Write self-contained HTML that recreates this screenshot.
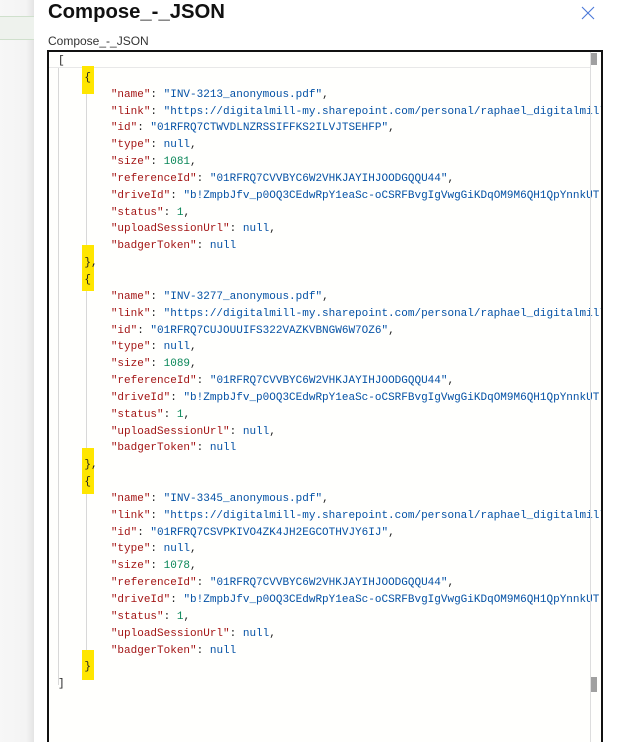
<!DOCTYPE html>
<html style="overflow:hidden;height:742px"><head><style>
body{margin:0;width:618px;height:742px;overflow:hidden;background:#fff;font-family:"Liberation Sans",sans-serif;position:relative}
.left{position:absolute;left:0;top:0;width:34px;height:742px;background:linear-gradient(to right,#f7f7f7 0,#f4f4f4 26px,#e4e4e4 34px)}
.lt{position:absolute;left:0;top:16px;width:34px;height:22px;background:#eef2ed;border-top:1px solid #cfe0cc;border-bottom:1px solid #cfe0cc}
h1{position:absolute;left:48px;top:1px;margin:0;font-size:20.3px;font-weight:bold;color:#111}
.lbl{position:absolute;left:48px;top:34px;font-size:12px;color:#333}
.x{position:absolute;left:581px;top:6px;width:14px;height:14px}
.ed{position:absolute;left:47px;top:50px;width:552px;height:692px;border:2px solid #111;border-bottom:none;background:#fffffd;overflow:hidden}
pre{position:absolute;left:9px;top:1px;margin:0;font-family:"Liberation Mono",monospace;font-size:11px;line-height:16.85px;color:#222;white-space:pre}
.k{color:#a31515}.s{color:#0451a5}.n{color:#0451a5}.d{color:#098658}
.hl{position:absolute;left:33px;width:12px;background:#ffe600}
.g{position:absolute;width:1px;background:#d8d8d8}
.sb{position:absolute;left:541px;top:0;width:1px;height:692px;background:#ddd}
.th{position:absolute;left:542px;width:6px;background:#a0a0a0}
</style></head><body>
<div class="left"><div class="lt"></div></div>
<h1>Compose_-_JSON</h1>
<svg class="x" viewBox="0 0 14 14"><path d="M1 1L13 13M13 1L1 13" stroke="#4a78d8" stroke-width="1.1"/></svg>
<div class="lbl">Compose_-_JSON</div>
<div class="ed">
<div class="g" style="left:9px;top:15px;height:618px"></div>
<div class="g" style="left:37px;top:30px;height:172px"></div>
<div class="g" style="left:37px;top:232px;height:172px"></div>
<div class="g" style="left:37px;top:434px;height:172px"></div>
<div style="position:absolute;left:0;top:15px;width:541px;height:1px;background:#e8e8e8"></div>
<div class="hl" style="top:14px;height:28px"></div>
<div class="hl" style="top:193px;height:46px"></div>
<div class="hl" style="top:396px;height:46px"></div>
<div class="hl" style="top:598px;height:30px"></div>
<pre>[
    {
        <span class="k">"name"</span>: <span class="s">"INV-3213_anonymous.pdf"</span>,
        <span class="k">"link"</span>: <span class="s">"https://digitalmill-my.sharepoint.com/personal/raphael_digitalmill</span>
        <span class="k">"id"</span>: <span class="s">"01RFRQ7CTWVDLNZRSSIFFKS2ILVJTSEHFP"</span>,
        <span class="k">"type"</span>: <span class="n">null</span>,
        <span class="k">"size"</span>: <span class="d">1081</span>,
        <span class="k">"referenceId"</span>: <span class="s">"01RFRQ7CVVBYC6W2VHKJAYIHJOODGQQU44"</span>,
        <span class="k">"driveId"</span>: <span class="s">"b!ZmpbJfv_p0OQ3CEdwRpY1eaSc-oCSRFBvgIgVwgGiKDqOM9M6QH1QpYnnkUT</span>
        <span class="k">"status"</span>: <span class="d">1</span>,
        <span class="k">"uploadSessionUrl"</span>: <span class="n">null</span>,
        <span class="k">"badgerToken"</span>: <span class="n">null</span>
    },
    {
        <span class="k">"name"</span>: <span class="s">"INV-3277_anonymous.pdf"</span>,
        <span class="k">"link"</span>: <span class="s">"https://digitalmill-my.sharepoint.com/personal/raphael_digitalmill</span>
        <span class="k">"id"</span>: <span class="s">"01RFRQ7CUJOUUIFS322VAZKVBNGW6W7OZ6"</span>,
        <span class="k">"type"</span>: <span class="n">null</span>,
        <span class="k">"size"</span>: <span class="d">1089</span>,
        <span class="k">"referenceId"</span>: <span class="s">"01RFRQ7CVVBYC6W2VHKJAYIHJOODGQQU44"</span>,
        <span class="k">"driveId"</span>: <span class="s">"b!ZmpbJfv_p0OQ3CEdwRpY1eaSc-oCSRFBvgIgVwgGiKDqOM9M6QH1QpYnnkUT</span>
        <span class="k">"status"</span>: <span class="d">1</span>,
        <span class="k">"uploadSessionUrl"</span>: <span class="n">null</span>,
        <span class="k">"badgerToken"</span>: <span class="n">null</span>
    },
    {
        <span class="k">"name"</span>: <span class="s">"INV-3345_anonymous.pdf"</span>,
        <span class="k">"link"</span>: <span class="s">"https://digitalmill-my.sharepoint.com/personal/raphael_digitalmill</span>
        <span class="k">"id"</span>: <span class="s">"01RFRQ7CSVPKIVO4ZK4JH2EGCOTHVJY6IJ"</span>,
        <span class="k">"type"</span>: <span class="n">null</span>,
        <span class="k">"size"</span>: <span class="d">1078</span>,
        <span class="k">"referenceId"</span>: <span class="s">"01RFRQ7CVVBYC6W2VHKJAYIHJOODGQQU44"</span>,
        <span class="k">"driveId"</span>: <span class="s">"b!ZmpbJfv_p0OQ3CEdwRpY1eaSc-oCSRFBvgIgVwgGiKDqOM9M6QH1QpYnnkUT</span>
        <span class="k">"status"</span>: <span class="d">1</span>,
        <span class="k">"uploadSessionUrl"</span>: <span class="n">null</span>,
        <span class="k">"badgerToken"</span>: <span class="n">null</span>
    }
]</pre>
<div class="sb"></div>
<div class="th" style="top:1px;height:12px"></div>
<div class="th" style="top:625px;height:15px"></div>
</div>
</body></html>
